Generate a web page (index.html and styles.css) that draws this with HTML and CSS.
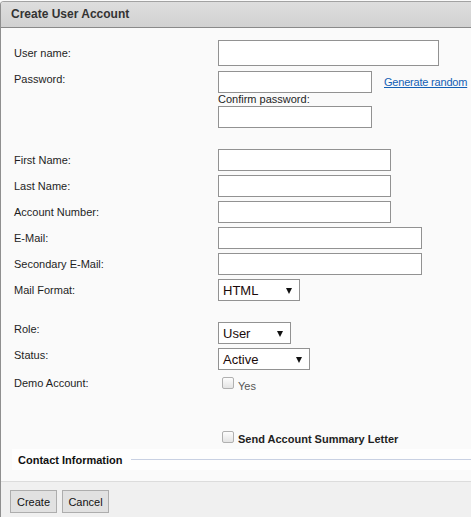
FILE: index.html
```html
<!DOCTYPE html>
<html>
<head>
<meta charset="utf-8">
<link rel="stylesheet" href="styles.css">
</head>
<body>
<div class="panel">
  <div class="header">Create User Account</div>
  <div class="content">
    <div class="row r-user">
      <label class="lbl">User name:</label>
      <input class="field w-user h26" type="text">
    </div>
    <div class="row r-pass top">
      <label class="lbl pt1">Password:</label>
      <div class="passcol">
        <div class="passline">
          <input class="field w-pass" type="password">
          <a class="gen" href="#">Generate random</a>
        </div>
        <div class="confirm">Confirm password:</div>
        <input class="field w-pass" type="password">
      </div>
    </div>
    <div class="row r-first">
      <label class="lbl">First Name:</label>
      <input class="field w-name" type="text">
    </div>
    <div class="row r-next">
      <label class="lbl">Last Name:</label>
      <input class="field w-name" type="text">
    </div>
    <div class="row r-next">
      <label class="lbl">Account Number:</label>
      <input class="field w-name" type="text">
    </div>
    <div class="row r-next">
      <label class="lbl">E-Mail:</label>
      <input class="field w-mail" type="text">
    </div>
    <div class="row r-next">
      <label class="lbl">Secondary E-Mail:</label>
      <input class="field w-mail" type="text">
    </div>
    <div class="row r-next">
      <label class="lbl">Mail Format:</label>
      <div class="select w-html"><span>HTML</span><i class="arrow"></i></div>
    </div>
    <div class="row r-role top">
      <label class="lbl">Role:</label>
      <div class="select w-role"><span>User</span><i class="arrow"></i></div>
    </div>
    <div class="row r-next top">
      <label class="lbl">Status:</label>
      <div class="select w-status"><span>Active</span><i class="arrow"></i></div>
    </div>
    <div class="row r-demo top">
      <label class="lbl">Demo Account:</label>
      <div class="checkwrap">
        <input class="cb" type="checkbox">
        <span class="yes">Yes</span>
      </div>
    </div>
    <div class="row r-send top">
      <span class="lbl"></span>
      <div class="checkwrap">
        <input class="cb" type="checkbox">
        <span class="send">Send Account Summary Letter</span>
      </div>
    </div>
    <div class="contact">
      <span class="legend">Contact Information</span>
      <span class="rule"></span>
    </div>
  </div>
  <div class="footer">
    <button class="btn">Create</button>
    <button class="btn">Cancel</button>
  </div>
</div>
</body>
</html>
```

FILE: styles.css
```css
html, body {
  margin: 0;
  padding: 0;
  background: #fafafa;
  overflow: hidden;
}
body {
  font-family: "Liberation Sans", Arial, sans-serif;
  font-size: 11px;
  color: #1e1e1e;
}
.panel {
  margin-top: 1px;
  border-left: 1px solid #8f8f8f;
  border-top: 1px solid #a2a2a2;
  border-top-left-radius: 4px;
  background: #fafafa;
}
.header {
  height: 25px;
  line-height: 25px;
  padding-left: 10px;
  font-size: 12px;
  font-weight: bold;
  color: #333;
  background: linear-gradient(#dedede, #d1d1d1);
  border-bottom: 1px solid #8a8a8a;
  border-top-left-radius: 3px;
}
.content {
  padding-top: 12px;
  padding-left: 13px;
}
.row {
  display: flex;
  align-items: center;
}
.row.top {
  align-items: flex-start;
}
.lbl {
  width: 204px;
  flex: none;
  line-height: 14px;
  color: #1e1e1e;
}
.pt1 { padding-top: 1px; }
.r-pass { margin-top: 5px; }
.r-first { margin-top: 21px; }
.r-next { margin-top: 4px; }
.r-role { margin-top: 21px; }
.r-demo { margin-top: 6px; height: 16px; }
.r-send { margin-top: 38px; height: 14px; }

.field {
  box-sizing: border-box;
  height: 22px;
  margin: 0;
  padding: 0 3px;
  border: 1px solid #929292;
  background: #fff;
  font-family: "Liberation Sans", Arial, sans-serif;
  font-size: 13px;
  outline: none;
  display: block;
}
.h26 { height: 26px; }
.w-user { width: 221px; }
.w-pass { width: 154px; }
.w-name { width: 173px; }
.w-mail { width: 204px; }

.passcol {
  display: flex;
  flex-direction: column;
}
.passline {
  display: flex;
  align-items: center;
  gap: 12px;
}
.gen {
  color: #1360b5;
  text-decoration: underline;
  font-size: 11px;
  line-height: 14px;
  letter-spacing: -0.2px;
  white-space: nowrap;
}
.confirm {
  line-height: 13px;
  color: #1e1e1e;
}

.select {
  box-sizing: border-box;
  height: 22px;
  border: 1px solid #929292;
  background: #fff;
  display: flex;
  align-items: center;
  justify-content: space-between;
  padding: 0 7px 0 4px;
  font-size: 13px;
  color: #1a0a0a;
}
.w-html { width: 82px; }
.w-role { width: 73px; }
.w-status { width: 92px; }
.arrow {
  width: 0;
  height: 0;
  border-left: 3px solid transparent;
  border-right: 3px solid transparent;
  border-top: 6px solid #111;
  margin-top: 1px;
}

.checkwrap {
  display: flex;
  align-items: flex-start;
  padding-left: 4px;
}
.cb {
  appearance: none;
  -webkit-appearance: none;
  box-sizing: border-box;
  width: 12px;
  height: 12px;
  margin: 1px 0 0 0;
  border: 1px solid #b0b0b0;
  border-radius: 2px;
  background: linear-gradient(#fdfdfd, #e4e4e4);
}
.yes {
  margin-left: 4px;
  margin-top: 4px;
  line-height: 13px;
  color: #555;
}
.send {
  margin-left: 4px;
  margin-top: 2px;
  line-height: 14px;
  font-weight: bold;
  color: #1e1e1e;
}

.contact {
  margin-top: 5px;
  margin-left: -2px;
  height: 21px;
  background: #fefefe;
  display: flex;
  align-items: center;
  padding-left: 6px;
}
.legend {
  font-weight: bold;
  color: #111;
  line-height: 14px;
}
.rule {
  flex: 1;
  height: 1px;
  background: #c9d1e3;
  margin-left: 8px;
  margin-top: -1px;
}

.footer {
  margin-top: 11px;
  border-top: 1px solid #dcdcdc;
  background: #f0f0f0;
  padding: 8px 0 0 9px;
  height: 27px;
  box-sizing: content-box;
  display: flex;
  gap: 5px;
  align-items: flex-start;
}
.btn {
  box-sizing: border-box;
  width: 47px;
  height: 23px;
  margin: 0;
  padding: 0;
  border: 1px solid #adadad;
  background: #e1e1e1;
  font-family: "Liberation Sans", Arial, sans-serif;
  font-size: 11px;
  color: #111;
}
```
